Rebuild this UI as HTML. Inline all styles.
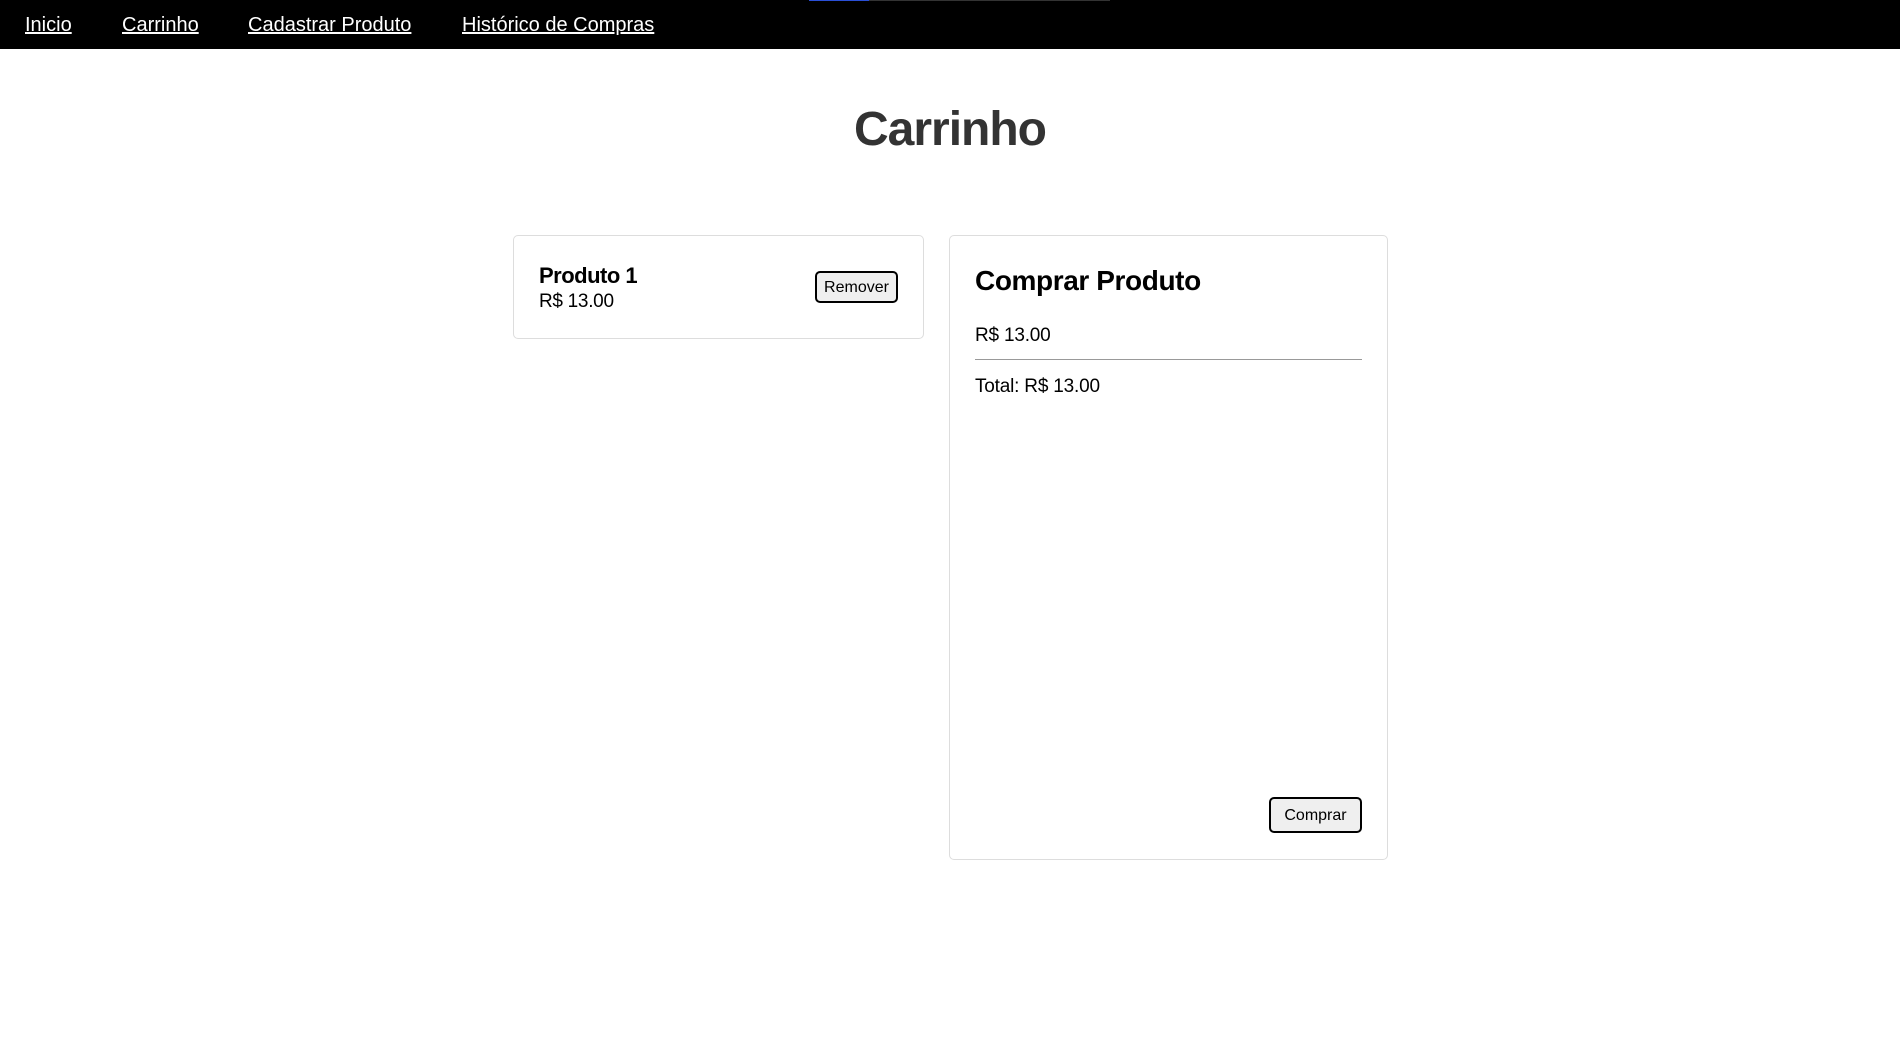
<!DOCTYPE html>
<html><head><meta charset="utf-8"><style>
*{box-sizing:border-box;margin:0;padding:0}
body{width:1900px;height:1062px;background:#fff;font-family:"Liberation Sans",sans-serif;position:relative;overflow:hidden}
nav{position:absolute;left:0;top:0;width:1900px;height:49px;background:#000}
nav a{position:absolute;top:14px;color:#fff;font-size:20px;text-decoration:underline;letter-spacing:0}
.bar1{position:absolute;top:0;left:809px;width:60px;height:1px;background:#2a4fd6}
.bar2{position:absolute;top:0;left:869px;width:241px;height:1px;background:#333}
h1{position:absolute;left:0;width:1900px;text-align:center;top:102px;font-size:48px;color:#333;font-weight:bold;letter-spacing:-1px}
.card{position:absolute;border:1px solid #ddd;border-radius:5px;background:#fff}
.t{position:absolute;white-space:nowrap}
.btn{position:absolute;border:2px solid #000;border-radius:5px;background:#efefef;font-size:16px;text-align:center}
</style></head><body>
<nav>
<div class="bar1"></div><div class="bar2"></div>
<a style="left:25px">Inicio</a>
<a style="left:122px">Carrinho</a>
<a style="left:248px">Cadastrar Produto</a>
<a style="left:462px">Histórico de Compras</a>
</nav>
<h1>Carrinho</h1>
<div class="card" style="left:513px;top:235px;width:411px;height:104px"></div>
<div class="t" style="left:539px;top:263px;font-size:22px;font-weight:bold;letter-spacing:-0.5px">Produto 1</div>
<div class="t" style="left:539px;top:291px;font-size:19px;letter-spacing:-0.3px">R$ 13.00</div>
<div class="btn" style="left:815px;top:271px;width:83px;height:32px;line-height:29px">Remover</div>
<div class="card" style="left:949px;top:235px;width:439px;height:625px"></div>
<div class="t" style="left:975px;top:265px;font-size:28px;font-weight:bold;letter-spacing:-0.4px">Comprar Produto</div>
<div class="t" style="left:975px;top:325px;font-size:19px;letter-spacing:-0.2px">R$ 13.00</div>
<div style="position:absolute;left:975px;top:359px;width:387px;height:1px;background:#999"></div>
<div class="t" style="left:975px;top:376px;font-size:19px;letter-spacing:-0.2px">Total: R$ 13.00</div>
<div class="btn" style="left:1269px;top:797px;width:93px;height:36px;line-height:33px">Comprar</div>
</body></html>
